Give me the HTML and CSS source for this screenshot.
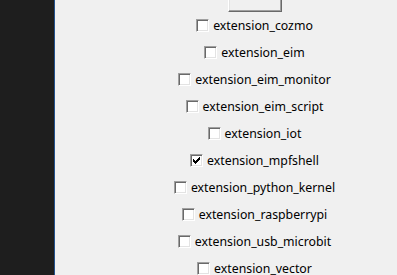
FILE: index.html
```html
<!DOCTYPE html>
<html>
<head>
<meta charset="utf-8">
<link rel="stylesheet" href="styles.css">
</head>
<body>
<div class="app">
  <div class="sidebar"></div>
  <div class="main">
    <div class="list">
      <button class="btn"></button>
      <label class="row"><span class="box"></span><span class="txt">extension_cozmo</span></label>
      <label class="row"><span class="box"></span><span class="txt">extension_eim</span></label>
      <label class="row"><span class="box"></span><span class="txt">extension_eim_monitor</span></label>
      <label class="row"><span class="box"></span><span class="txt">extension_eim_script</span></label>
      <label class="row"><span class="box"></span><span class="txt">extension_iot</span></label>
      <label class="row"><span class="box"><svg class="check" width="7" height="7" viewBox="0 0 7 7"><path d="M0 2h1v3H0zM1 3h1v3H1zM2 4h1v3H2zM3 3h1v3H3zM4 2h1v3H4zM5 1h1v3H5zM6 0h1v3H6z" fill="#000"/></svg></span><span class="txt">extension_mpfshell</span></label>
      <label class="row"><span class="box"></span><span class="txt">extension_python_kernel</span></label>
      <label class="row"><span class="box"></span><span class="txt">extension_raspberrypi</span></label>
      <label class="row"><span class="box"></span><span class="txt">extension_usb_microbit</span></label>
      <label class="row"><span class="box"></span><span class="txt">extension_vector</span></label>
    </div>
  </div>
</div>
</body>
</html>
```
FILE: styles.css
```css
html, body {
  margin: 0;
  padding: 0;
  width: 397px;
  height: 275px;
  overflow: hidden;
  background: #f0f0f0;
}
.app {
  display: flex;
  height: 275px;
}
.sidebar {
  width: 54px;
  flex-shrink: 0;
  background: #1e1e1e;
  border-right: 1px solid #24528e;
}
.main {
  flex: 1;
  min-width: 0;
  background: #f0f0f0;
  overflow: hidden;
}
.list {
  display: flex;
  flex-direction: column;
  align-items: center;
  margin-top: -14px;
  padding-left: 57px;
}
.btn {
  width: 54px;
  height: 26px;
  margin: 0;
  padding: 0;
  background: #f0f0f0;
  border: 1px solid;
  border-color: #ffffff #696969 #696969 #ffffff;
  box-shadow: inset -1px -1px #a0a0a0, inset 1px 1px #e3e3e3;
  box-sizing: border-box;
}
.row {
  height: 27px;
  display: flex;
  align-items: center;
  gap: 4px;
  font-family: "Noto Sans", sans-serif;
  font-size: 12.3px;
  color: #000;
  white-space: nowrap;
}
.box {
  width: 13px;
  height: 13px;
  flex-shrink: 0;
  box-sizing: border-box;
  background: #fff;
  border: 1px solid;
  border-color: #a0a0a0 #ffffff #ffffff #a0a0a0;
  box-shadow: inset 1px 1px #696969, inset -1px -1px #e3e3e3;
  display: flex;
  padding: 2px 0 0 2px;
}
.check {
  display: block;
}
.txt {
  line-height: 16px;
  padding-top: 1px;
}
```
